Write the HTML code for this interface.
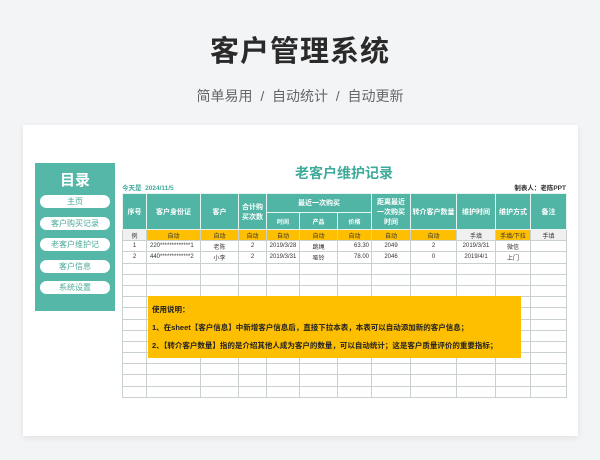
<!DOCTYPE html>
<html><head><meta charset="utf-8"><style>
*{margin:0;padding:0;box-sizing:border-box}
body{width:600px;height:460px;background:#f3f4f6;font-family:"Liberation Sans","Noto Sans CJK SC",sans-serif;position:relative;overflow:hidden}
.t{position:absolute;left:0;width:600px;text-align:center;top:28px;font-size:29px;font-weight:bold;color:#2a2a2a;letter-spacing:1px}
.s{position:absolute;left:0;width:600px;text-align:center;top:86px;font-size:14px;color:#666}
.card{position:absolute;left:23px;top:125px;width:555px;height:311px;background:#fff;box-shadow:0 2px 6px rgba(0,0,0,.08)}
.side{position:absolute;left:35px;top:163px;width:80px;height:148px;background:#55b7a8}
.side h3{color:#fff;font-size:15px;text-align:center;padding-top:6px;height:32px}
.side div{width:70px;height:13px;margin:0 auto 8.5px;background:#fff;border-radius:7px;font-size:8px;color:#4aa898;text-align:center;line-height:13px}
.h1{position:absolute;left:122px;width:444px;text-align:center;top:163px;font-size:14px;font-weight:bold;color:#3fab9a}
.sm{position:absolute;top:182px;font-size:6.5px;font-weight:bold}
table{position:absolute;left:122px;top:193px;border-collapse:collapse;table-layout:fixed;font-size:6px}
td{border:1px solid #c8d0d0;text-align:center;height:11.2px;padding:0;color:#333;white-space:nowrap;overflow:hidden}
.hd td{background:#50b5a5;color:#fff;font-weight:bold;border-color:#e8f4f2;font-size:7px}
.hd2 td{font-size:6px}
.y{background:#fdbf00}
.g{background:#f0f0f0}
.note{position:absolute;left:148px;top:296px;width:373px;height:62px;background:#fdbf00;font-size:7.5px;font-weight:bold;color:#222;padding:9px 4px;line-height:10px}
.note p{margin-bottom:8px}
</style></head><body>
<div class="t">客户管理系统</div>
<div class="s">简单易用 &nbsp;/&nbsp; 自动统计 &nbsp;/&nbsp; 自动更新</div>
<div class="card"></div>
<div class="side"><h3>目录</h3><div>主页</div><div>客户购买记录</div><div>老客户维护记</div><div>客户信息</div><div>系统设置</div></div>
<div class="h1">老客户维护记录</div>
<div class="sm" style="left:122px;color:#3fab9a">今天是 &nbsp;2024/11/5</div>
<div class="sm" style="right:34px;color:#333">制表人：老陈PPT</div>
<table>
<colgroup><col style="width:24px"><col style="width:54px"><col style="width:38px"><col style="width:28px"><col style="width:33px"><col style="width:38px"><col style="width:34px"><col style="width:39px"><col style="width:46px"><col style="width:39px"><col style="width:35px"><col style="width:36px"></colgroup>
<tr class="hd" style="height:19px"><td rowspan="2">序号</td><td rowspan="2">客户身份证</td><td rowspan="2">客户</td><td rowspan="2">合计购<br>买次数</td><td colspan="3">最近一次购买</td><td rowspan="2">距离最近<br>一次购买<br>时间</td><td rowspan="2">转介客户数量</td><td rowspan="2">维护时间</td><td rowspan="2">维护方式</td><td rowspan="2">备注</td></tr>
<tr class="hd hd2" style="height:17px"><td>时间</td><td>产品</td><td>价格</td></tr>
<tr><td class="g">例</td><td class="y">自动</td><td class="y">自动</td><td class="y">自动</td><td class="y">自动</td><td class="y">自动</td><td class="y">自动</td><td class="y">自动</td><td class="y">自动</td><td class="g">手填</td><td class="y">手填/下拉</td><td class="g">手填</td></tr>
<tr><td>1</td><td style="text-align:left;padding-left:3px">220*************1</td><td>老陈</td><td>2</td><td>2019/3/28</td><td>跳绳</td><td style="text-align:right;padding-right:2px">63.30</td><td>2049</td><td>2</td><td>2019/3/31</td><td>微信</td><td></td></tr>
<tr><td>2</td><td style="text-align:left;padding-left:3px">440*************2</td><td>小李</td><td>2</td><td>2019/3/31</td><td>哑铃</td><td style="text-align:right;padding-right:2px">78.00</td><td>2046</td><td>0</td><td>2019/4/1</td><td>上门</td><td></td></tr>
<tr><td></td><td></td><td></td><td></td><td></td><td></td><td></td><td></td><td></td><td></td><td></td><td></td></tr>
<tr><td></td><td></td><td></td><td></td><td></td><td></td><td></td><td></td><td></td><td></td><td></td><td></td></tr>
<tr><td></td><td></td><td></td><td></td><td></td><td></td><td></td><td></td><td></td><td></td><td></td><td></td></tr>
<tr><td></td><td></td><td></td><td></td><td></td><td></td><td></td><td></td><td></td><td></td><td></td><td></td></tr>
<tr><td></td><td></td><td></td><td></td><td></td><td></td><td></td><td></td><td></td><td></td><td></td><td></td></tr>
<tr><td></td><td></td><td></td><td></td><td></td><td></td><td></td><td></td><td></td><td></td><td></td><td></td></tr>
<tr><td></td><td></td><td></td><td></td><td></td><td></td><td></td><td></td><td></td><td></td><td></td><td></td></tr>
<tr><td></td><td></td><td></td><td></td><td></td><td></td><td></td><td></td><td></td><td></td><td></td><td></td></tr>
<tr><td></td><td></td><td></td><td></td><td></td><td></td><td></td><td></td><td></td><td></td><td></td><td></td></tr>
<tr><td></td><td></td><td></td><td></td><td></td><td></td><td></td><td></td><td></td><td></td><td></td><td></td></tr>
<tr><td></td><td></td><td></td><td></td><td></td><td></td><td></td><td></td><td></td><td></td><td></td><td></td></tr>
<tr><td></td><td></td><td></td><td></td><td></td><td></td><td></td><td></td><td></td><td></td><td></td><td></td></tr>
</table>
<div class="note"><p>使用说明：</p><p>1、在sheet【客户信息】中新增客户信息后，直接下拉本表，本表可以自动添加新的客户信息；</p><p>2、【转介客户数量】指的是介绍其他人成为客户的数量，可以自动统计；这是客户质量评价的重要指标；</p></div>
</body></html>
